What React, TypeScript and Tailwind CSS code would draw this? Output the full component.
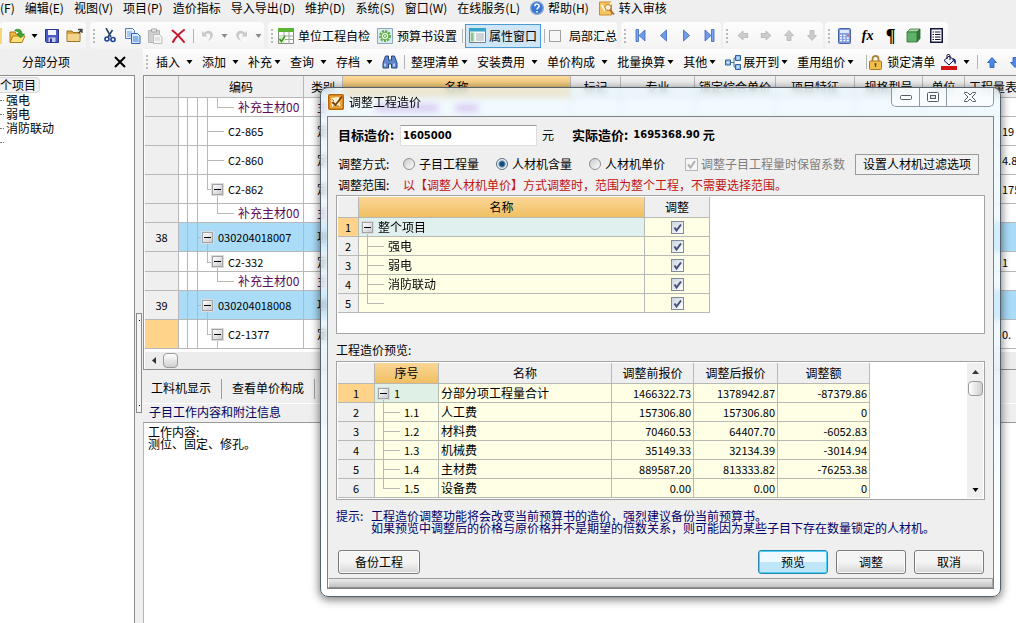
import { useState } from "react";
import type { ReactNode } from "react";
import clsx from "clsx";

/* ---------- iconos ---------- */

function Caret({ muted = false }: { muted?: boolean }) {
  return (
    <svg width="7" height="4" viewBox="0 0 7 4" className={muted ? "text-[#8a8a8a]" : "text-black"}>
      <path d="M0.5 0h6L3.5 4z" fill="currentColor" />
    </svg>
  );
}

function OpenIcon() {
  return (
    <svg width="17" height="16" viewBox="0 0 17 16">
      <path d="M1 4h5l1 2h6v8H1z" fill="#f0b93a" stroke="#a8741a" />
      <path d="M1 14.5 4 8h12l-3 6.500z" fill="#ffe07a" stroke="#b07d20" />
      <path d="M6 2c4-2 7 0 7 4h2.500L11.500 10 8 6h2c0-2-1.500-3-4-3z" fill="#39a935" stroke="#1d7a1d" strokeWidth=".6" />
    </svg>
  );
}

function SaveIcon() {
  return (
    <svg width="14" height="14" viewBox="0 0 14 14">
      <path d="M.5.5h13v13h-12l-1-1z" fill="#4a5cc8" stroke="#2a368f" />
      <path d="M3 1h8v5H3z" fill="#f3f6fd" />
      <path d="M3.500 8.500h7V13h-7z" fill="#c8cfee" />
      <path d="M5 9.500h2V13H5z" fill="#2a368f" />
    </svg>
  );
}

function FolderIcon() {
  return (
    <svg width="17" height="15" viewBox="0 0 17 15">
      <path d="M1 3h5l1 1.500h7V13.500H1z" fill="#d9a441" stroke="#9b7427" />
      <path d="M1.500 6h12v7h-12z" fill="#f2d58a" />
      <path d="M12 1.500h4V5M16 1.500 12.500 5" fill="none" stroke="#444" strokeWidth="1.300" />
    </svg>
  );
}

function CutIcon() {
  return (
    <svg width="14" height="15" viewBox="0 0 14 15">
      <path d="M3 0 8 9M9.500 2 5 9" stroke="#2c4664" strokeWidth="1.600" fill="none" />
      <circle cx="4" cy="11" r="2" fill="none" stroke="#1b3f9c" strokeWidth="1.600" />
      <circle cx="10" cy="11.500" r="2" fill="none" stroke="#1b3f9c" strokeWidth="1.600" />
    </svg>
  );
}

function CopyIcon() {
  return (
    <svg width="16" height="16" viewBox="0 0 16 16">
      <path d="M.5.5h7l2 2v8h-9z" fill="#e8f1fd" stroke="#4f7fc2" />
      <path d="M2 4h5M2 6h5M2 8h4" stroke="#6c9fe0" />
      <path d="M6.500 5.500h6l2.500 2.500v7.500H6.500z" fill="#d7e8fb" stroke="#2f64ad" />
      <path d="M8 9h5M8 11h5.500M8 13h5.500" stroke="#3f7fd0" />
    </svg>
  );
}

function PasteIcon() {
  return (
    <svg width="15" height="16" viewBox="0 0 15 16">
      <path d="M.5 2.500h11v12H.5z" fill="#d0d0d0" stroke="#b4b4b4" />
      <path d="M3.500 1h5v3h-5z" fill="#e8e8e8" stroke="#a8a8a8" />
      <path d="M5.500 6.500h6l2.500 2.500v6.500H5.500z" fill="#f4f4f4" stroke="#bdbdbd" />
      <path d="M7 10h5M7 12h5" stroke="#cfcfcf" />
    </svg>
  );
}

function DeleteIcon() {
  return (
    <svg width="15" height="14" viewBox="0 0 15 14">
      <path d="M1.500 1.500C5 4 10 9 13 13M13 1C9 4 4 9 2 13" stroke="#c4162c" strokeWidth="2" fill="none" strokeLinecap="round" />
    </svg>
  );
}

function UndoIcon({ flip = false }: { flip?: boolean }) {
  return (
    <svg width="13" height="13" viewBox="0 0 13 13" className={flip ? "-scale-x-100" : ""}>
      <path d="M1 2v5.500h5.500L4.500 5.500c3-2.500 5.500-.5 4.500 3L7 12c5-2.500 6-6.500 3.500-9C8.500 1 5.500 1.500 3 4z" fill="#c9c9c9" />
    </svg>
  );
}

function SheetIcon() {
  return (
    <svg width="16" height="16" viewBox="0 0 16 16">
      <path d="M.5.5h15v15H.5z" fill="#fff" stroke="#7f8c7f" />
      <path d="M0 0h16v4H0z" fill="#5cb531" />
      <path d="M.5 8h15M.5 11.500h15M6 4v12M11 4v12" stroke="#9aa79a" />
      <path d="M1 8h6v7H1z" fill="#d9f0c8" />
      <path d="m1.500 11 2 2.500L7 8" stroke="#3f8f1c" strokeWidth="1.600" fill="none" />
    </svg>
  );
}

function GearIcon() {
  return (
    <svg width="16" height="16" viewBox="0 0 16 16">
      <path d="M.5.5h15v15H.5z" fill="#dcebf3" stroke="#8aa8b8" />
      <circle cx="8" cy="8" r="5" fill="#e9f8e4" stroke="#5daa46" strokeWidth="2" strokeDasharray="2.200 1.100" />
      <circle cx="8" cy="8" r="3.800" fill="none" stroke="#5daa46" />
      <circle cx="8" cy="8" r="1.500" fill="#fff" stroke="#5daa46" />
    </svg>
  );
}

function PropsIcon() {
  return (
    <svg width="17" height="15" viewBox="0 0 17 15">
      <path d="M.5.5h16v14H.5z" fill="#f8fbfd" stroke="#6b7f8e" />
      <path d="M0 0h17v3.500H0z" fill="#36a3c9" />
      <path d="M1 4h4.500v10H1z" fill="#cfe9d0" />
      <path d="M2 6h2.500M2 8h2.500M2 10h2.500M2 12h2.500" stroke="#4b9a5a" />
      <path d="M7 6h8M7 8h8M7 10h8M7 12h8" stroke="#a3adb5" />
    </svg>
  );
}

function NavIcon({ back = false, bar = false }: { back?: boolean; bar?: boolean }) {
  return (
    <svg width="11" height="13" viewBox="0 0 11 13" className={back ? "-scale-x-100" : ""}>
      <path d={bar ? "M1 1v11l6-5.500z" : "M2.500 1v11l6-5.500z"} fill="#6f9be8" stroke="#3b66bd" strokeWidth=".8" />
      {bar && <path d="M7.500.5h2.500v12H7.500z" fill="#7ba6ee" stroke="#3b66bd" strokeWidth=".8" />}
    </svg>
  );
}

function ArrowIcon({ dir, blue = false }: { dir: "up" | "down" | "left" | "right"; blue?: boolean }) {
  const turn = { up: "", down: "rotate-180", left: "-rotate-90", right: "rotate-90" }[dir];
  return (
    <svg width="10" height="11" viewBox="0 0 10 11" className={turn}>
      <path
        d="M5 .5 9.500 5.500H7v5H3v-5H.5z"
        fill={blue ? "#4d8ae8" : "#cccccc"}
        stroke={blue ? "#2456b0" : "#b5b5b5"}
        strokeWidth=".8"
      />
    </svg>
  );
}

function CalcIcon() {
  return (
    <svg width="13" height="16" viewBox="0 0 13 16">
      <rect x=".5" y=".5" width="12" height="15" rx="1" fill="#7f9bdc" stroke="#4a62a8" />
      <path d="M2 2h9v3H2z" fill="#dfe9fb" />
      <path d="M2 7.500h9M2 10h9M2 12.500h9" stroke="#fff" strokeWidth="1.600" strokeDasharray="2 1.400" />
      <path d="M9 7.500h2" stroke="#d2574a" strokeWidth="1.600" />
    </svg>
  );
}

function CubeIcon() {
  return (
    <svg width="15" height="15" viewBox="0 0 15 15">
      <path d="M1 4 4 1h10l-3 3z" fill="#a9dcab" stroke="#3a7a3e" strokeWidth=".8" />
      <path d="M11 4l3-3v9.500l-3 3.500z" fill="#2f7a37" stroke="#2a5f2f" strokeWidth=".8" />
      <path d="M1 4h10v10H1z" fill="#5fb168" stroke="#2f6f35" strokeWidth=".8" />
    </svg>
  );
}

function ListIcon() {
  return (
    <svg width="13" height="15" viewBox="0 0 13 15">
      <path d="M.75.75h11.500v13.500H.75z" fill="#fff" stroke="#14143c" strokeWidth="1.500" />
      <path d="M2.500 4h1.500M5 4h5.500M2.500 6.500h1.500M5 6.500h5.500M2.500 9h1.500M5 9h5.500M2.500 11.500h1.500M5 11.500h5.500" stroke="#14143c" />
    </svg>
  );
}

function BinocularsIcon() {
  return (
    <svg width="16" height="14" viewBox="0 0 16 14">
      <path d="M3.500 1h3v4h3V1h3l2.500 7v5H9.500V9h-3v4H1V8z" fill="#5e86c9" stroke="#27477f" />
      <path d="M3 8.500v3M12 8.500v3" stroke="#cfe0fa" strokeWidth="1.500" />
    </svg>
  );
}

function ExpandIcon() {
  return (
    <svg width="16" height="15" viewBox="0 0 16 15">
      <path d="M6 7.500h3M9 3v9M9 3h2M9 12h2" stroke="#3f70a8" fill="none" />
      <path d="M.5 5h5v5h-5zM10.500.5h5v5h-5zM10.500 9.500h5v5h-5z" fill="#8fbcec" stroke="#2f64a0" />
      <path d="M2 7.500h2M12 3h2M12 12h2" stroke="#fff" />
    </svg>
  );
}

function LockIcon() {
  return (
    <svg width="13" height="15" viewBox="0 0 13 15">
      <path d="M3.500 7V4c0-4 6-4 6 0v3" fill="none" stroke="#a98436" strokeWidth="1.800" />
      <rect x=".5" y="6" width="12" height="8.500" rx="1" fill="#f0bf4a" stroke="#a97a1e" />
      <path d="M6.500 8.500v3.500M5.500 9h2" stroke="#6a4508" strokeWidth="1.300" />
    </svg>
  );
}

function FillIcon() {
  return (
    <svg width="17" height="16" viewBox="0 0 17 16">
      <path d="m3 6.500 5-4.500 5 4-5 5z" fill="#eef2fb" stroke="#10103a" />
      <path d="M6 5V1.500C6 0 9 0 9 2v4" fill="none" stroke="#10103a" />
      <path d="M12 4c3 1 3.500 3 2.500 6.500C13 9.500 13 7 11.500 6z" fill="#1b2f80" />
      <path d="M0 12h16v4H0z" fill="#d21414" />
    </svg>
  );
}

function HelpIcon() {
  return (
    <svg width="14" height="14" viewBox="0 0 14 14">
      <circle cx="7" cy="7" r="6.400" fill="#3a78d8" stroke="#8fa9cc" strokeWidth="1.200" />
      <path d="M4.800 5.300c.1-3 4.600-2.800 4.300 0C9 6.700 7 6.700 7 8.600M7 10v1.500" fill="none" stroke="#fff" strokeWidth="1.500" />
    </svg>
  );
}

function AuditIcon() {
  return (
    <svg width="16" height="15" viewBox="0 0 16 15">
      <path d="M.5 1h12v13H.5z" fill="#f6c45c" stroke="#cf8a2a" />
      <path d="m2.500 4 3 5 8-8" stroke="#fff6dc" strokeWidth="1.800" fill="none" />
      <circle cx="9" cy="6.500" r="3" fill="#fdf3d8" stroke="#b9792a" />
      <path d="m11 9 4 4.500" stroke="#b9611a" strokeWidth="1.800" />
    </svg>
  );
}

function AppIcon() {
  return (
    <svg width="16" height="16" viewBox="0 0 16 16">
      <rect x=".75" y=".75" width="14.500" height="14.500" rx="1" fill="#f7a928" stroke="#b5660c" strokeWidth="1.500" />
      <path d="M2.500 3.500 11 2.500l2 10-9.500 1z" fill="#fff4d2" stroke="#c98420" strokeWidth=".6" />
      <path d="m3.500 5 2.500 2M4 8.500l1.500 1.500M5 12h6" stroke="#b5660c" />
      <path d="M14 2.500 7.500 11 4.500 8" fill="none" stroke="#7a3d08" strokeWidth="1.800" />
    </svg>
  );
}

/* ---------- piezas comunes ---------- */

function Grip() {
  return (
    <span className="flex w-2 shrink-0 items-center justify-center">
      <span className="h-[14px] w-0 border-l-2 border-dotted border-[#b9b9b9]" />
    </span>
  );
}

function Separator() {
  return (
    <span className="flex w-[6px] shrink-0 items-center justify-center">
      <span className="h-[14px] w-px bg-[#b4b4b4]" />
    </span>
  );
}

function ToolGroup({ children, label }: { children: ReactNode; label: string }) {
  return (
    <div
      role="toolbar"
      aria-label={label}
      className="flex h-[27px] shrink-0 items-center rounded-sm bg-gradient-to-b from-[#fdfdfd] to-[#f3f3f3]"
    >
      {children}
    </div>
  );
}

function IconButton({ label, children }: { label: string; children: ReactNode }) {
  return (
    <button type="button" aria-label={label} title={label} className="flex h-6 w-[23px] shrink-0 items-center justify-center">
      {children}
    </button>
  );
}

function CaretButton({ label, muted = false }: { label: string; muted?: boolean }) {
  return (
    <button type="button" aria-label={label} className="flex h-6 w-[11px] shrink-0 items-center justify-center">
      <Caret muted={muted} />
    </button>
  );
}

function MenuButton({ text, tight = false, icon }: { text: string; tight?: boolean; icon?: ReactNode }) {
  return (
    <button type="button" className="flex h-6 shrink-0 items-center whitespace-nowrap">
      {icon && <span className="mr-[2px]">{icon}</span>}
      {text}
      <span className={tight ? "w-[18px] pl-[2px]" : "w-[22px] pl-[6px]"}>
        <Caret />
      </span>
    </button>
  );
}

type TreeProps = {
  through?: number[];
  from: number;
  to: number;
  last?: boolean;
  down?: number;
};

/* líneas guía del árbol, detrás del contenido de la celda */
function TreeLines({ through = [], from, to, last = false, down }: TreeProps) {
  return (
    <svg className="absolute inset-0 h-full w-full" fill="#b9b9b4" shapeRendering="crispEdges" aria-hidden="true">
      {through.map((x) => (
        <rect key={x} x={x} y="0" width="1" height="100%" />
      ))}
      {to > from && <rect x={from} y="0" width="1" height={last ? "50%" : "100%"} />}
      {to > from && <rect x={from} y="50%" width={to - from} height="1" />}
      {down !== undefined && <rect x={down} y="50%" width="1" height="50%" />}
    </svg>
  );
}

function CollapseBox() {
  return (
    <button
      type="button"
      aria-label="折叠"
      className="flex size-[11px] shrink-0 items-center justify-center border border-[#a2a2a2] bg-gradient-to-br from-white to-[#c8cbd2] outline outline-[#dcdcdc]"
    >
      <span className="h-px w-[7px] bg-black" />
    </button>
  );
}

function GridCheckbox({ label }: { label: string }) {
  return (
    <span className="relative mx-auto flex size-[13px]">
      <input
        type="checkbox"
        defaultChecked
        aria-label={label}
        className="peer size-[13px] appearance-none border border-[#7f8b99] bg-gradient-to-br from-[#cdd4de] to-white"
      />
      <svg viewBox="0 0 13 13" className="pointer-events-none absolute inset-0 hidden peer-checked:block">
        <path d="M3.500 6.500 5.500 9.500 10 3.500" fill="none" stroke="#41507f" strokeWidth="2" />
      </svg>
    </span>
  );
}

/* ---------- datos ---------- */

const menus = ["文件(F)", "编辑(E)", "视图(V)", "项目(P)", "造价指标", "导入导出(D)", "维护(D)", "系统(S)", "窗口(W)", "在线服务(L)"];

type ItemKind = "part" | "leaf" | "quota" | "list";

type GridRow = {
  no?: string;
  code: string;
  kind: ItemKind;
  type: string;
  qty?: string;
  open?: boolean;
  height: string;
  current?: boolean;
};

const gridRows: GridRow[] = [
  { code: "补充主材00", kind: "part", type: "主", open: true, height: "h-[19px]" },
  { code: "C2-865", kind: "leaf", type: "定", qty: "19", height: "h-[29px]" },
  { code: "C2-860", kind: "leaf", type: "定", qty: "4.8", height: "h-[29px]" },
  { code: "C2-862", kind: "quota", type: "定", qty: "175", height: "h-[29px]" },
  { code: "补充主材00", kind: "part", type: "主", height: "h-[19px]" },
  { no: "38", code: "030204018007", kind: "list", type: "项", height: "h-[29px]" },
  { code: "C2-332", kind: "quota", type: "定", qty: "1", height: "h-[20px]" },
  { code: "补充主材00", kind: "part", type: "主", height: "h-[19px]" },
  { no: "39", code: "030204018008", kind: "list", type: "项", height: "h-[29px]" },
  { code: "C2-1377", kind: "quota", type: "定", qty: "0.", height: "h-[29px]", current: true },
];

const gridHeads = ["", "编码", "类别", "名称", "标记", "专业", "锁定综合单价", "项目特征", "规格型号", "单位", "工程量表达式"];

const treeByKind: Record<ItemKind, { lines: TreeProps; pad: string }> = {
  part: { lines: { through: [8, 18], from: 38, to: 55, last: true }, pad: "pl-[59px] text-[#5a0a5a]" },
  leaf: { lines: { through: [8, 18], from: 28, to: 45 }, pad: "pl-[49px] text-[11px]" },
  quota: { lines: { through: [8, 18], from: 28, to: 34, last: true, down: 38 }, pad: "pl-[33px] text-[11px]" },
  list: { lines: { through: [8], from: 18, to: 24, down: 28 }, pad: "pl-[23px] text-[11px]" },
};

const scopes = ["整个项目", "强电", "弱电", "消防联动", ""];

const preview = [
  ["1", "分部分项工程量合计", "1466322.73", "1378942.87", "-87379.86"],
  ["1.1", "人工费", "157306.80", "157306.80", "0"],
  ["1.2", "材料费", "70460.53", "64407.70", "-6052.83"],
  ["1.3", "机械费", "35149.33", "32134.39", "-3014.94"],
  ["1.4", "主材费", "889587.20", "813333.82", "-76253.38"],
  ["1.5", "设备费", "0.00", "0.00", "0"],
];

/* ---------- ventana principal ---------- */

function MenuBar() {
  return (
    <nav className="flex h-[22px] items-start gap-[10px] whitespace-nowrap leading-4">
      {menus.map((m) => (
        <button key={m} type="button" className="shrink-0 first:-ml-6">
          {m}
        </button>
      ))}
      <button type="button" className="flex shrink-0 items-center gap-1">
        <HelpIcon />
        帮助(H)
      </button>
      <button type="button" className="flex shrink-0 items-center gap-1">
        <AuditIcon />
        转入审核
      </button>
    </nav>
  );
}

function MainToolbar() {
  return (
    <div className="flex gap-1 overflow-hidden">
      <ToolGroup label="文件">
        <span className="mr-1 h-4 w-[2px] bg-[#f5d978]" />
        <IconButton label="打开"><OpenIcon /></IconButton>
        <CaretButton label="最近文件" />
        <IconButton label="保存"><SaveIcon /></IconButton>
        <IconButton label="关闭"><FolderIcon /></IconButton>
      </ToolGroup>
      <ToolGroup label="编辑">
        <Grip />
        <IconButton label="剪切"><CutIcon /></IconButton>
        <IconButton label="复制"><CopyIcon /></IconButton>
        <IconButton label="粘贴"><PasteIcon /></IconButton>
        <IconButton label="删除"><DeleteIcon /></IconButton>
        <Separator />
        <IconButton label="撤销"><UndoIcon /></IconButton>
        <CaretButton label="撤销列表" muted />
        <IconButton label="恢复"><UndoIcon flip /></IconButton>
        <CaretButton label="恢复列表" muted />
      </ToolGroup>
      <ToolGroup label="项目">
        <Grip />
        <button type="button" className="flex h-6 items-center gap-1 px-[2px]">
          <SheetIcon />
          单位工程自检
        </button>
        <button type="button" className="ml-[3px] flex h-6 items-center gap-1 px-[2px]">
          <GearIcon />
          预算书设置
        </button>
        <Separator />
        <button type="button" aria-pressed="true" className="flex h-6 items-center gap-[3px] border border-[#4a9ad4] bg-[#cfe6f7] px-[3px]">
          <PropsIcon />
          属性窗口
        </button>
        <Separator />
        <label className="flex items-center gap-2 pl-[2px]">
          <input type="checkbox" className="size-3 appearance-none border border-[#a0a0a0] bg-[#f7f7f7]" />
          局部汇总
        </label>
      </ToolGroup>
      <div className="flex gap-[2px]">
        <ToolGroup label="导航">
          <Grip />
          <IconButton label="首条"><NavIcon back bar /></IconButton>
          <IconButton label="上一条"><NavIcon back /></IconButton>
          <IconButton label="下一条"><NavIcon /></IconButton>
          <IconButton label="末条"><NavIcon bar /></IconButton>
        </ToolGroup>
        <ToolGroup label="移动">
          <Grip />
          <IconButton label="左移"><ArrowIcon dir="left" /></IconButton>
          <IconButton label="右移"><ArrowIcon dir="right" /></IconButton>
          <IconButton label="上移"><ArrowIcon dir="up" /></IconButton>
          <IconButton label="下移"><ArrowIcon dir="down" /></IconButton>
        </ToolGroup>
        <ToolGroup label="工具">
          <Grip />
          <IconButton label="计算器"><CalcIcon /></IconButton>
          <IconButton label="函数">
            <span className="font-['Liberation_Serif',serif] text-[14px] leading-4 font-bold italic">fx</span>
          </IconButton>
          <IconButton label="段落">
            <span className="font-['Liberation_Serif',serif] text-[18px] leading-4 font-bold">¶</span>
          </IconButton>
          <IconButton label="图形"><CubeIcon /></IconButton>
          <IconButton label="列表"><ListIcon /></IconButton>
        </ToolGroup>
      </div>
    </div>
  );
}

function GridToolbar() {
  return (
    <div role="toolbar" aria-label="分部分项" className="flex h-[26px] items-center overflow-hidden bg-gradient-to-b from-[#fdfdfd] to-[#f1f1f1]">
      <Grip />
      <div className="flex items-center pl-[5px]">
        <MenuButton text="插入" />
        <MenuButton text="添加" />
        <MenuButton text="补充" tight />
        <MenuButton text="查询" />
        <MenuButton text="存档" />
      </div>
      <button type="button" aria-label="查找" className="shrink-0 pr-[3px]">
        <BinocularsIcon />
      </button>
      <Separator />
      <div className="flex items-center pl-1">
        <MenuButton text="整理清单" tight />
        <MenuButton text="安装费用" />
        <MenuButton text="单价构成" />
        <MenuButton text="批量换算" tight />
        <MenuButton text="其他" tight />
        <MenuButton text="展开到" tight icon={<ExpandIcon />} />
        <MenuButton text="重用组价" tight />
      </div>
      <Separator />
      <button type="button" className="flex shrink-0 items-center gap-[5px]">
        <LockIcon />
        锁定清单
      </button>
      <button type="button" aria-label="填充颜色" className="flex shrink-0 items-center gap-[5px] pr-1 pl-[6px]">
        <FillIcon />
        <Caret />
      </button>
      <Separator />
      <IconButton label="上移"><ArrowIcon dir="up" blue /></IconButton>
      <IconButton label="下移"><ArrowIcon dir="down" blue /></IconButton>
    </div>
  );
}

function Sidebar() {
  return (
    <aside className="flex w-[135px] shrink-0 flex-col">
      <div className="flex h-[26px] shrink-0 items-center justify-between pr-2 pl-[22px]">
        <span>分部分项</span>
        <button type="button" aria-label="关闭" className="p-px">
          <svg width="12" height="12" viewBox="0 0 12 12">
            <path d="M1 1l10 10M11 1 1 11" stroke="#000" strokeWidth="2" />
          </svg>
        </button>
      </div>
      <ul className="flex-1 overflow-hidden border-t border-r border-[#8c8c8c] bg-white pt-px leading-[14px]">
        <li className="-ml-[13px] w-[53px] rounded-sm border border-[#d8d8d8] bg-[#f0f0f0]">整个项目</li>
        {["强电", "弱电", "消防联动", ""].map((t) => (
          <li key={t} className="flex h-[14px] items-center">
            <span className="mr-[2px] w-1 border-t border-dotted border-[#777]" />
            {t}
          </li>
        ))}
      </ul>
    </aside>
  );
}

function MainGrid() {
  return (
    <div className="overflow-hidden border-y border-l border-[#8f8f8f] bg-white pl-px">
      <table className="w-[945px] table-fixed border-separate border-spacing-0">
        <colgroup>
          <col className="w-[34px]" />
          <col className="w-[125px]" />
          <col className="w-[39px]" />
          <col className="w-[228px]" />
          <col className="w-[50px]" />
          <col className="w-[74px]" />
          <col className="w-[81px]" />
          <col className="w-[79px]" />
          <col className="w-[68px]" />
          <col className="w-[42px]" />
          <col />
        </colgroup>
        <thead>
          <tr className="h-[22px]">
            {gridHeads.map((h, i) => (
              <th
                key={h}
                className={clsx(
                  "overflow-hidden border-r border-b border-[#b8b8b8] p-0 leading-4 font-normal whitespace-nowrap",
                  h === "名称" ? "bg-gradient-to-b from-[#fbd896] to-[#eeb95a]" : "bg-[#efefef]",
                  i === gridHeads.length - 1 && "pl-1 text-left",
                )}
              >
                {h}
              </th>
            ))}
          </tr>
        </thead>
        <tbody>
          {gridRows.map((r, i) => {
            const tree = treeByKind[r.kind];
            const lines = r.open ? { ...tree.lines, through: [8, 18, 28] } : tree.lines;
            const cell = clsx("border-r border-b border-[#b8b8b8] p-0 leading-4", r.kind === "list" && "bg-[#aadcf8]");
            return (
              <tr key={i} className={r.height}>
                <td className={clsx("border-r border-b border-[#b8b8b8] p-0 text-center text-[11px] leading-4", r.current ? "bg-[#ffd48a]" : "bg-[#efefef]")}>
                  {r.no}
                </td>
                <td className={clsx(cell, "relative")}>
                  <TreeLines {...lines} />
                  <div className={clsx("relative flex items-center gap-[5px] whitespace-nowrap", tree.pad)}>
                    {(r.kind === "quota" || r.kind === "list") && <CollapseBox />}
                    {r.code}
                  </div>
                </td>
                <td className={clsx(cell, "text-center", r.kind === "part" && "text-[#5a0a5a]")}>{r.type}</td>
                {gridHeads.slice(3, -1).map((h) => (
                  <td key={h} className={cell} />
                ))}
                <td className={clsx(cell, "pl-[37px] text-[11px]")}>{r.qty}</td>
              </tr>
            );
          })}
        </tbody>
      </table>
      <div className="h-[3px]" />
      <div className="flex h-[17px] items-center bg-[#ececec]">
        <button type="button" aria-label="向左滚动" className="flex w-[18px] justify-center">
          <svg width="4" height="7" viewBox="0 0 4 7">
            <path d="M4 0v7L0 3.500z" fill="#333" />
          </svg>
        </button>
        <span className="h-[15px] w-[15px] rounded-sm border border-[#9a9a9a] bg-gradient-to-b from-white to-[#cfcfcf]" />
      </div>
    </div>
  );
}

function DetailPanel() {
  return (
    <section className="flex flex-1 flex-col">
      <div className="flex h-[33px] items-end pb-1">
        <button type="button" className="h-[22px] pr-[10px] pl-2">工料机显示</button>
        <span className="h-5 w-px bg-[#9d9d9d]" />
        <button type="button" className="h-[22px] px-[10px]">查看单价构成</button>
        <span className="h-5 w-px bg-[#9d9d9d]" />
      </div>
      <h2 className="h-5 border-t border-b border-t-white border-b-[#9a9a9a] pl-[6px] leading-4 text-[#00005c]">
        子目工作内容和附注信息
      </h2>
      <div className="flex-1 border-l border-[#b5b5b5] bg-white pt-[3px] pl-1 leading-3">
        <p>工作内容:</p>
        <p>测位、固定、修孔。</p>
      </div>
    </section>
  );
}

/* ---------- diálogo ---------- */

const headCell = "border-r border-b border-[#b9b9b4] bg-[#efefef] p-0 leading-4 font-normal";
const activeHead = "border-r border-b border-[#b9b9b4] bg-gradient-to-b from-[#fad695] to-[#f0bf62] p-0 leading-4 font-normal";
const bodyCell = "border-r border-b border-[#b9b9b4] bg-[#ffffe6] p-0 leading-4";

function RowNo({ n }: { n: number }) {
  return (
    <td className={clsx("border-r border-b border-[#b9b9b4] p-0 text-center text-[11px] leading-4", n === 1 ? "bg-[#ffd48a]" : "bg-[#efefef]")}>
      {n}
    </td>
  );
}

function ScopeTable() {
  return (
    <table className="w-[372px] table-fixed border-separate border-spacing-0">
      <colgroup>
        <col className="w-[21px]" />
        <col className="w-[286px]" />
        <col className="w-[65px]" />
      </colgroup>
      <thead>
        <tr className="h-[21px]">
          <th className={headCell} />
          <th className={activeHead}>名称</th>
          <th className={headCell}>调整</th>
        </tr>
      </thead>
      <tbody>
        {scopes.map((s, i) => (
          <tr key={s} className="h-[19px]">
            <RowNo n={i + 1} />
            <td className={clsx("relative border-r border-b border-[#b9b9b4] p-0 leading-4", i === 0 ? "bg-[#dff0ee]" : "bg-[#ffffe6]")}>
              {i === 0 ? (
                <TreeLines from={0} to={0} down={8} />
              ) : (
                <TreeLines from={8} to={25} last={i === scopes.length - 1} />
              )}
              <div className={clsx("relative flex items-center gap-[5px]", i === 0 ? "pl-[3px]" : "pl-[29px]")}>
                {i === 0 && <CollapseBox />}
                {s}
              </div>
            </td>
            <td className={bodyCell}>
              <GridCheckbox label={`调整 ${i + 1}`} />
            </td>
          </tr>
        ))}
      </tbody>
    </table>
  );
}

function PreviewTable() {
  return (
    <table className="w-[532px] table-fixed border-separate border-spacing-0">
      <colgroup>
        <col className="w-[37px]" />
        <col className="w-[64px]" />
        <col className="w-[173px]" />
        <col className="w-[82px]" />
        <col className="w-[84px]" />
        <col className="w-[92px]" />
      </colgroup>
      <thead>
        <tr className="h-[21px]">
          <th className={headCell} />
          <th className={activeHead}>序号</th>
          <th className={headCell}>名称</th>
          <th className={headCell}>调整前报价</th>
          <th className={headCell}>调整后报价</th>
          <th className={headCell}>调整额</th>
        </tr>
      </thead>
      <tbody>
        {preview.map(([no, name, ...amounts], i) => (
          <tr key={no} className="h-[19px]">
            <RowNo n={i + 1} />
            <td className={clsx("relative border-r border-b border-[#b9b9b4] p-0 text-[11px] leading-4", i === 0 ? "bg-[#dff0e6]" : "bg-[#ffffe6]")}>
              {i === 0 ? (
                <TreeLines from={0} to={0} down={8} />
              ) : (
                <TreeLines from={8} to={25} last={i === preview.length - 1} />
              )}
              <div className={clsx("relative flex items-center gap-[5px]", i === 0 ? "pl-[3px]" : "pl-[29px]")}>
                {i === 0 && <CollapseBox />}
                {no}
              </div>
            </td>
            <td className={clsx(bodyCell, "pl-[2px]")}>{name}</td>
            {amounts.map((a, k) => (
              <td key={k} className={clsx(bodyCell, "pr-[2px] text-right text-[11px]")}>
                {a}
              </td>
            ))}
          </tr>
        ))}
      </tbody>
    </table>
  );
}

function Radio({ text, value, mode, onPick }: { text: string; value: string; mode: string; onPick: (v: string) => void }) {
  return (
    <label className="flex items-center gap-1 whitespace-nowrap">
      <input
        type="radio"
        name="mode"
        value={value}
        checked={mode === value}
        onChange={() => onPick(value)}
        className="size-3 appearance-none rounded-full border border-[#8e8f8f] bg-gradient-to-br from-[#c9c9c9] to-white checked:border-[#5b6f80] checked:bg-radial checked:from-[#12507e] checked:from-30% checked:to-[#eaf3f8] checked:to-60%"
      />
      {text}
    </label>
  );
}

function DialogButton({ text, primary = false, className = "w-[70px]" }: { text: string; primary?: boolean; className?: string }) {
  return (
    <button
      type="button"
      className={clsx(
        "h-6 rounded-[3px] border",
        primary
          ? "border-[#2a86ad] bg-gradient-to-b from-[#eef9fe] from-50% to-[#bfe6f8] to-50% shadow-[inset_0_0_0_1px_#4fd0f5]"
          : "border-[#7a7a7a] bg-gradient-to-b from-[#f4f4f4] from-50% to-[#d6d6d6] shadow-[inset_0_0_0_1px_#fafafa]",
        className,
      )}
    >
      {text}
    </button>
  );
}

function CostDialog() {
  const [mode, setMode] = useState("content");
  const [target, setTarget] = useState("1605000");

  return (
    <div
      role="dialog"
      aria-label="调整工程造价"
      className="absolute top-[87px] right-[15px] left-[320px] rounded-lg border border-[#55606a] bg-gradient-to-b from-[#eaf8ff]/70 via-[#e4f6ff]/60 to-white/80 px-[6px] pb-[7px] shadow-[0_2px_8px_1px_rgba(0,0,0,0.5)] backdrop-blur-[3px]"
    >
      <header className="flex h-7 items-start justify-between">
        <div className="relative flex h-7 items-center gap-[5px] pl-px">
          {/* reflejo del texto que queda detrás del cristal */}
          <span className="absolute bottom-1 left-12 h-2 w-16 rounded-full bg-[#b98be0]/40 blur-[3px]" />
          <span className="absolute bottom-1 left-32 h-2 w-6 rounded-full bg-[#b98be0]/40 blur-[3px]" />
          <AppIcon />
          <span className="relative whitespace-nowrap">调整工程造价</span>
        </div>
        <div className="flex h-[19px] divide-x divide-[#8d99a5] rounded-b-[5px] border border-t-0 border-[#8d99a5] bg-white/60">
          <button type="button" aria-label="最小化" className="flex w-7 items-center justify-center">
            <svg width="12" height="5" viewBox="0 0 12 5">
              <rect x=".5" y=".5" width="11" height="4" rx="1" fill="#fff" stroke="#555b66" />
            </svg>
          </button>
          <button type="button" aria-label="最大化" className="flex w-[27px] items-center justify-center">
            <svg width="12" height="10" viewBox="0 0 12 10">
              <rect x=".5" y=".5" width="11" height="9" rx="1" fill="#fff" stroke="#555b66" />
              <rect x="3.500" y="3.500" width="5" height="3" fill="#dde4ec" stroke="#555b66" />
            </svg>
          </button>
          <button type="button" aria-label="关闭" className="flex w-[46px] items-center justify-center">
            <svg width="12" height="10" viewBox="0 0 12 10">
              <path d="M.5.5h3L6 3 8.500.5h3v1L8 5l3.500 3.500v1h-3L6 7 3.500 9.500h-3v-1L4 5 .5 1.500z" fill="#fff" stroke="#555b66" />
            </svg>
          </button>
        </div>
      </header>

      <div className="border border-[#7c8288] bg-[#efefef]">
        <form className="px-2" onSubmit={(e) => e.preventDefault()}>
          <div className="flex h-9 items-center whitespace-nowrap">
            <label htmlFor="target" className="w-16 pl-[2px] text-[13px] font-bold">目标造价:</label>
            <input
              id="target"
              value={target}
              onChange={(e) => setTarget(e.target.value)}
              className="h-[21px] w-[137px] border border-[#dedede] border-t-[#9a9a9a] bg-white px-[2px] font-['DejaVu_Sans',sans-serif] text-[10px] font-bold outline-none"
            />
            <span className="pl-[5px]">元</span>
            <span className="pr-[5px] pl-[18px] text-[13px] font-bold">实际造价:</span>
            <span className="font-['DejaVu_Sans',sans-serif] text-[10px] font-bold">1695368.90</span>
            <span className="pl-[3px] font-bold">元</span>
          </div>

          <div className="flex h-[22px] items-center whitespace-nowrap">
            <span className="w-[67px] pl-[2px]">调整方式:</span>
            <div className="flex gap-[17px]">
              <Radio text="子目工程量" value="quantity" mode={mode} onPick={setMode} />
              <Radio text="人材机含量" value="content" mode={mode} onPick={setMode} />
              <Radio text="人材机单价" value="price" mode={mode} onPick={setMode} />
            </div>
            <label className="flex items-center gap-[3px] pl-5 text-[#7d7d7d]">
              <span className="relative flex size-[13px]">
                <input type="checkbox" defaultChecked disabled className="size-[13px] appearance-none border border-[#b5b5b5] bg-[#f6f6f6]" />
                <svg viewBox="0 0 13 13" className="absolute inset-0">
                  <path d="M3 6.500 5.500 9.500 10 3" fill="none" stroke="#b0b0b0" strokeWidth="2" />
                </svg>
              </span>
              调整子目工程量时保留系数
            </label>
            <button type="button" className="ml-[10px] h-[21px] w-[124px] border border-[#9a9a9a] bg-[#f1f1f1]">
              设置人材机过滤选项
            </button>
          </div>

          <div className="flex h-5 items-center whitespace-nowrap">
            <span className="w-[67px] pl-[2px]">调整范围:</span>
            <span className="text-[#c01414]">以【调整人材机单价】方式调整时，范围为整个工程，不需要选择范围。</span>
          </div>

          <div className="h-[139px] border border-[#a3a3a3] bg-white p-px">
            <ScopeTable />
          </div>

          <h3 className="h-[27px] pt-2">工程造价预览:</h3>

          <div className="flex h-[139px] justify-between border border-[#a3a3a3] bg-white p-px">
            <PreviewTable />
            <div className="flex w-4 flex-col items-center bg-[#efefef]">
              <button type="button" aria-label="向上滚动" className="flex h-[18px] items-center">
                <svg width="7" height="4" viewBox="0 0 7 4"><path d="M0 4h7L3.500 0z" fill="#333" /></svg>
              </button>
              <span className="h-[15px] w-[15px] rounded-sm border border-[#9a9a9a] bg-gradient-to-r from-white to-[#cfcfcf]" />
              <button type="button" aria-label="向下滚动" className="mt-auto flex h-4 items-center">
                <Caret />
              </button>
            </div>
          </div>

          <div className="flex pt-[10px] leading-3 text-[#00006a]">
            <span className="w-[35px] shrink-0">提示:</span>
            <p>
              工程造价调整功能将会改变当前预算书的造价，强烈建议备份当前预算书。
              <br />
              如果预览中调整后的价格与原价格并不是期望的倍数关系，则可能因为某些子目下存在数量锁定的人材机。
            </p>
          </div>

          <div className="mt-4 flex items-center gap-2 pr-px pl-[2px]">
            <DialogButton text="备份工程" className="mr-auto w-[82px]" />
            <DialogButton text="预览" primary />
            <DialogButton text="调整" />
            <DialogButton text="取消" />
          </div>
        </form>
        <div className="mt-1 h-[10px] border border-t-[#9b9b9b] border-r-[#a8a8a8] border-b-[#8c8c8c] border-l-white bg-gradient-to-b from-[#ececec] to-[#c2c2c2]" />
      </div>
    </div>
  );
}

export default function App() {
  return (
    <div className="relative flex min-h-screen flex-col overflow-hidden bg-[#efefef] font-['Noto_Sans_CJK_SC',sans-serif] text-[12px] leading-4 text-black">
      <MenuBar />
      <MainToolbar />
      <div className="flex flex-1">
        <Sidebar />
        <div className="w-2 shrink-0 pt-[264px] pl-px">
          <div className="flex h-[100px] w-[6px] flex-col items-center justify-between border border-[#8c8c8c] bg-[#f4f4f4] py-[6px]">
            <span className="size-px bg-black" />
            <span className="size-px bg-black" />
          </div>
        </div>
        <main className="flex min-w-0 flex-1 flex-col">
          <GridToolbar />
          <MainGrid />
          <DetailPanel />
        </main>
      </div>
      <CostDialog />
    </div>
  );
}
